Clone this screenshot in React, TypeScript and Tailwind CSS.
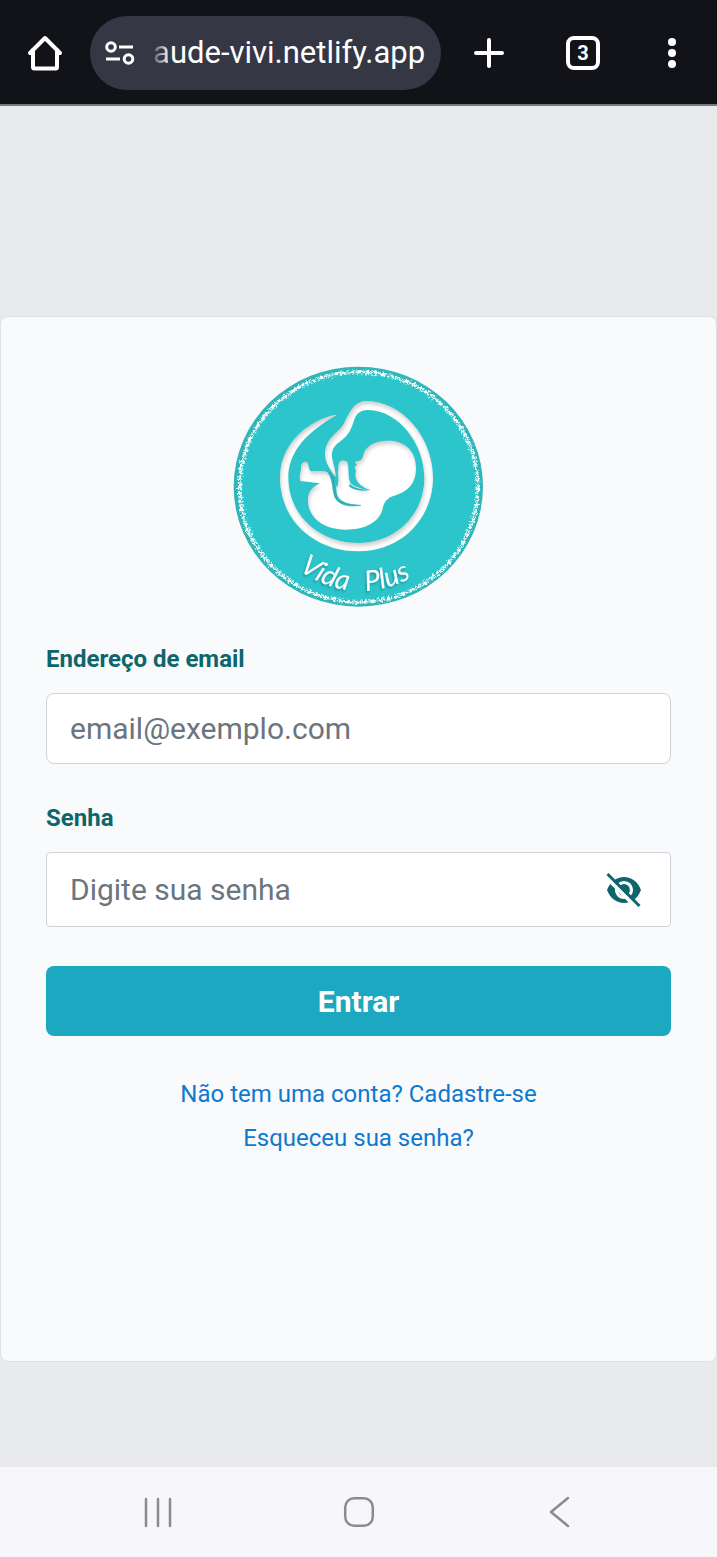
import React, { useState } from 'react';

const HomeIcon = () => (
    <svg viewBox="0 0 36 36" className="w-9 h-9" fill="none" stroke="#fff" strokeWidth="4" strokeLinejoin="round" strokeLinecap="round">
        <path d="M6 15V32a1.500 1.500 0 0 0 1.500 1.500h21A1.500 1.500 0 0 0 30 32V15" />
        <path d="M3 18 18 3l15 15" />
    </svg>
);

const SiteSettingsIcon = () => (
    <svg viewBox="0 0 30 26" className="w-[30px] h-[26px] flex-none" fill="none" stroke="#fff" strokeWidth="3">
        <circle cx="6" cy="7" r="4.300" />
        <path d="M14 7h14M1 19h14" />
        <circle cx="23.500" cy="19" r="4.300" />
    </svg>
);

const EyeOffIcon = () => (
    <svg viewBox="0 0 36 36" className="w-9 h-9">
        <path d="M1 18C4 10 10.500 5 18 5s14 5 17 13c-3 8-9.500 13-17 13S4 26 1 18Z" fill="#0c666b" />
        <circle cx="18" cy="18" r="7.500" fill="none" stroke="#fff" strokeWidth="3.200" />
        <path d="M-1 4 33 38" stroke="#fff" strokeWidth="4" />
        <path d="m1.500 2 32 32" stroke="#0c666b" strokeWidth="3" />
    </svg>
);

const Logo = () => (
    <svg viewBox="27 31 750 726" className="w-[250px] h-[242px] overflow-visible" role="img" aria-label="Vida Plus">
        <defs>
            <filter id="chalk" x="-5%" y="-5%" width="110%" height="110%">
                <feTurbulence type="fractalNoise" baseFrequency="0.15" numOctaves="2" seed="4" />
                <feDisplacementMap in="SourceGraphic" scale="18" xChannelSelector="R" yChannelSelector="G" />
            </filter>
            <filter id="inset" x="-10%" y="-10%" width="120%" height="120%">
                <feOffset in="SourceAlpha" dx="2" dy="9" />
                <feGaussianBlur stdDeviation="6" result="moved" />
                <feComposite in="SourceAlpha" in2="moved" operator="out" result="edge" />
                <feFlood floodColor="#5b5b66" floodOpacity="0.450" />
                <feComposite in2="edge" operator="in" result="shade" />
                <feMerge>
                    <feMergeNode in="SourceGraphic" />
                    <feMergeNode in="shade" />
                </feMerge>
            </filter>
            <filter id="drop" x="-10%" y="-20%" width="120%" height="150%">
                <feDropShadow dx="-3" dy="5" stdDeviation="3" floodColor="#0b5e66" floodOpacity="0.500" />
            </filter>
            <path id="arc" d="M222 646Q400 772 600 646" />
        </defs>
        <ellipse cx="400" cy="396" rx="374" ry="360" fill="#30b5b9" />
        <ellipse cx="400" cy="396" rx="355" ry="341" fill="#2bc5cb" />
        <g filter="url(#chalk)" fill="none" stroke="#f2ffff">
            <ellipse cx="401" cy="397" rx="358" ry="346" strokeWidth="9" strokeDasharray="13 3 6 2" />
            <ellipse cx="401" cy="397" rx="352" ry="340" strokeWidth="3" strokeDasharray="5 8" />
        </g>
        {/* Umbilical ring */}
        <path
            filter="url(#inset)"
            fill="#fff"
            d="M336 180C306 182 264 204 238 224C192 262 165 310 165 368C165 500 270 590 400 590C535 590 624 485 624 370C624 245 530 140 425 139C392 139 378 162 358 204C346 232 301 246 300 298C300 322 314 343 331 366C334 345 318 316 321 294C325 268 350 262 368 239C378 226 379 218 385 204C392 178 404 166 430 166C522 168 598 268 598 370C598 480 512 565 400 565C280 565 190 480 190 368C190 310 222 262 273 222C294 205 316 191 336 180Z"
        />
        {/* Baby */}
        <path
            filter="url(#inset)"
            fill="#fff"
            d="M415 302C420 274 450 258 490 258C540 258 573 289 573 340C573 390 546 412 503 425C482 433 476 447 472 467C459 506 416 525 362 525C294 525 249 488 249 437C249 411 261 397 285 386L226 379C222 371 226 352 229 343C226 328 234 321 243 321C253 323 248 342 258 350C275 350 304 344 318 360C329 372 331 384 336 400C345 375 336 356 340 345C341 333 339 322 348 319C357 316 366 318 368 326C373 346 367 372 379 389C396 398 414 406 437 406C413 397 393 387 391 360L393 348L389 337L396 332L390 322C401 318 409 322 415 302Z"
        />
        <path
            d="M306 348C348 371 320 414 347 437C363 449 384 450 407 452C382 456 356 454 340 441C316 422 332 384 306 348Z"
            fill="#2bb0b6"
            stroke="#2bb0b6"
            strokeWidth="2"
        />
        <path d="M374 388C391 402 414 406 438 405C412 411 388 408 372 395Z" fill="#2bb5bb" />
        <g filter="url(#drop)" fill="#fff" fontFamily="Lato, sans-serif" fontStyle="italic" fontSize="84">
            <text><textPath href="#arc" startOffset="0">Vida</textPath></text>
            <text><textPath href="#arc" startOffset="214">Plus</textPath></text>
        </g>
    </svg>
);

const BrowserBar = () => (
    <header className="flex items-center h-[106px] bg-[#111318] border-b-2 border-[#77787c] text-white pt-0.5 pl-[27px] pr-[37px]">
        <button aria-label="Início"><HomeIcon /></button>
        <div className="flex items-center flex-1 min-w-0 h-[74px] ml-[27px] rounded-full bg-[#353745] pl-[15px] pr-3">
            <SiteSettingsIcon />
            <div className="flex-1 ml-[18px] overflow-hidden whitespace-nowrap text-[31px] leading-10">
                <span className="bg-linear-to-r from-[#5d5f6b] to-white bg-clip-text text-transparent">a</span>ude-vivi.netlify.app
            </div>
        </div>
        <button aria-label="Nova guia" className="ml-8">
            <svg viewBox="0 0 32 32" className="w-8 h-8" stroke="#fff" strokeWidth="4" strokeLinecap="round">
                <path d="M16 3v26M3 16h26" />
            </svg>
        </button>
        <button aria-label="Guias abertas" className="ml-[61px] w-[34px] h-[34px] rounded-lg border-4 border-white flex items-center justify-center text-xl font-bold">
            3
        </button>
        <button aria-label="Menu" className="ml-16">
            <svg viewBox="0 0 16 34" className="w-4 h-[34px]" fill="#fff">
                <circle cx="8" cy="6" r="4" />
                <circle cx="8" cy="17" r="4" />
                <circle cx="8" cy="28" r="4" />
            </svg>
        </button>
    </header>
);

const LoginCard = () => {
    const [showPassword, setShowPassword] = useState(false);

    return (
        <div className="bg-[#f8fafc] border border-[#dfe1e6] rounded-lg px-[45px] pt-12 pb-[201px]">
            <div className="flex justify-center">
                <Logo />
            </div>
            <form onSubmit={(e) => e.preventDefault()}>
                <label htmlFor="email" className="block mt-[34px] text-2xl leading-9 font-bold text-[#0c666b]">Endereço de email</label>
                <input
                    id="email"
                    type="email"
                    placeholder="email@exemplo.com"
                    className="block w-full h-[71px] mt-4 px-[23px] rounded-lg border border-[#ced4da] bg-white text-[30px] placeholder:text-[#6c757d] outline-none"
                />
                <label htmlFor="senha" className="block mt-9 text-2xl leading-9 font-bold text-[#0c666b]">Senha</label>
                <div className="flex items-center h-[75px] mt-4 pl-[23px] pr-7 rounded-sm border border-[#ced4da] bg-white">
                    <input
                        id="senha"
                        type={showPassword ? 'text' : 'password'}
                        placeholder="Digite sua senha"
                        className="flex-1 min-w-0 text-[30px] placeholder:text-[#6c757d] outline-none"
                    />
                    <button type="button" aria-label="Mostrar senha" onClick={() => setShowPassword(!showPassword)}>
                        <EyeOffIcon />
                    </button>
                </div>
                <button type="submit" className="block w-full h-[70px] mt-[39px] rounded-lg bg-[#1ca8c0] text-white text-[30px] font-bold">
                    Entrar
                </button>
            </form>
            <div className="flex flex-col items-center mt-9 text-2xl leading-[44px] text-[#0f79d0]">
                <a href="#cadastro">Não tem uma conta? Cadastre-se</a>
                <a href="#recuperar">Esqueceu sua senha?</a>
            </div>
        </div>
    );
};

const SystemNav = () => (
    <nav className="flex items-center justify-between h-[90px] bg-[#f6f6fb] px-[142px]">
        <button aria-label="Recentes">
            <svg viewBox="0 0 32 32" className="w-8 h-8" stroke="#8b8a90" strokeWidth="2.500" strokeLinecap="round">
                <path d="M4 3v27M16 3v27M28 3v27" />
            </svg>
        </button>
        <button aria-label="Tela inicial">
            <svg viewBox="0 0 32 32" className="w-8 h-8" fill="none" stroke="#8b8a90" strokeWidth="2.500">
                <rect x="2.200" y="2.200" width="27.600" height="27.600" rx="9" />
            </svg>
        </button>
        <button aria-label="Voltar">
            <svg viewBox="0 0 32 32" className="w-8 h-8" fill="none" stroke="#8b8a90" strokeWidth="2.500" strokeLinecap="round" strokeLinejoin="round">
                <path d="M25 2 8 16l17 14" />
            </svg>
        </button>
    </nav>
);

export default function App() {
    return (
        <div className="flex flex-col min-h-screen font-[Roboto,sans-serif]">
            <BrowserBar />
            <main className="flex-1 bg-[#e9eaec] pt-[210px] pb-[105px]">
                <LoginCard />
            </main>
            <SystemNav />
        </div>
    );
}
